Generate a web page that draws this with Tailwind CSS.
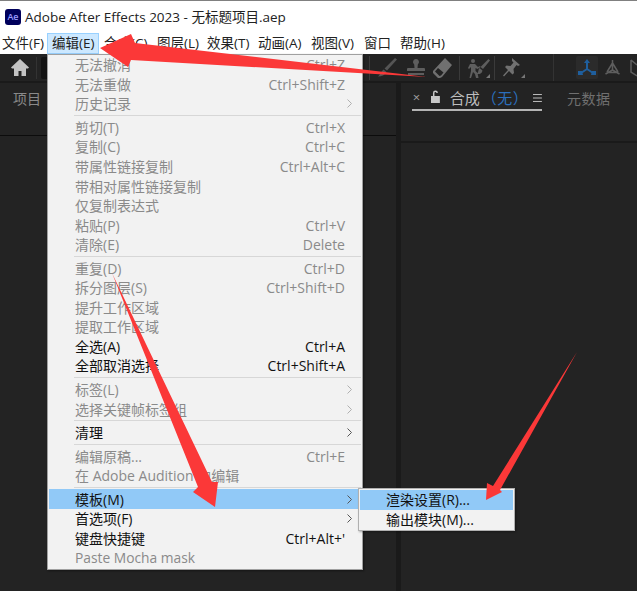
<!DOCTYPE html>
<html lang="zh-CN">
<head>
  <meta charset="utf-8" />
  <title>Adobe After Effects 2023</title>
  <script src="https://cdn.jsdelivr.net/npm/@tailwindcss/browser@4"></script>
</head>
<body class="w-[637px] h-[591px] overflow-hidden bg-[#232323] font-['Open_Sans','Noto_Sans_CJK_SC',sans-serif] text-[14px] text-[#111]">
<div class="relative w-[637px] h-[591px] flex flex-col">
  <!-- Title bar -->
  <div class="h-[33px] bg-white border-t border-[#808080] flex items-center pl-[5px] gap-[4px] shrink-0">
    <div class="w-[16px] h-[16px] rounded-[3px] bg-[#00005b] text-[#9999ff] text-[9px] leading-[16px] text-center font-semibold">Ae</div>
    <span class="text-[13.5px] text-[#222] whitespace-nowrap">Adobe After Effects 2023 - 无标题项目.aep</span>
  </div>
  <!-- Menu bar -->
  <div class="h-[21px] bg-white flex items-center shrink-0 text-[13.5px] text-[#222] whitespace-nowrap">
    <span class="pl-[2px] w-[47px]">文件(F)</span>
    <span class="h-[21px] w-[52px] pl-[4px] leading-[19px] bg-[#cce8ff] border border-[#99d1ff]">编辑(E)</span>
    <span class="w-[58px] pl-[5px]">合成(C)</span>
    <span class="w-[50px]">图层(L)</span>
    <span class="w-[51px]">效果(T)</span>
    <span class="w-[53px]">动画(A)</span>
    <span class="w-[53px]">视图(V)</span>
    <span class="w-[36px]">窗口</span>
    <span>帮助(H)</span>
  </div>
  <!-- Toolbar -->
  <div class="h-[29px] bg-[#232323] flex items-center shrink-0 border-b-2 border-[#1a1a1a]">
    <svg class="ml-[11px] w-[18px] h-[17px]" viewBox="0 0 18 17"><path fill="#c4c4c4" d="M9 0 0 8.500 1 9.500h2V17h4.500v-5h3v5H15V9.500h2l1-1z"/></svg>
    <div class="ml-[7px] w-px h-[22px] bg-[#333]"></div>
    <div class="ml-[4px] w-[6px] h-[22px] bg-[#141414] rounded-l-[2px]"></div>
    <div class="ml-[322px] w-px h-[24px] bg-[#3a3a3a]"></div>
    <svg class="ml-[8px] w-[19px] h-[19px]" viewBox="0 0 19 19"><path fill="#555" d="M17 0l2 1.500L9 12.500 6.500 10.500zM5.500 11.500l3 2.500C7 17 3.500 18.500 0 18.500c2-1.500 3-5 5.500-7z"/></svg>
    <svg class="ml-[10px] w-[18px] h-[17px]" viewBox="0 0 18 17"><path fill="#5e5e5e" d="M9 0a3 3 0 0 1 1.800 5.400L10.500 9H17a1 1 0 0 1 1 1v2H0v-2a1 1 0 0 1 1-1h6.500l-.3-3.600A3 3 0 0 1 9 0zM1 14h16v2H1z"/></svg>
    <svg class="ml-[8px] w-[19px] h-[20px]" viewBox="0 0 19 20"><path fill="#707070" fill-rule="evenodd" d="M12 0l7 7-10 12-2 1-2 0-5-5 0-2zM5 10 2 13.500 6.500 18l1.500-.500 2.500-3z"/></svg>
    <div class="ml-[7px] w-px h-[24px] bg-[#3a3a3a]"></div>
    <svg class="ml-[7px] w-[23px] h-[20px]" viewBox="0 0 23 20"><circle cx="6" cy="3" r="2" fill="#5e5e5e"/><path fill="#5e5e5e" d="M3 6h5l3 3 2-1 .500 1-3 2-2-1v3l2 2 1 5H9l-1-4-2-2-2 6H2.500l1.500-7V9l-2 2-1-1zM21.500 1 23 2.500 16 11l-2.500-2zM12.500 10l3 2.500c-.5 3-3 4-5.500 3.500 1.500-1.500 1-4 2.500-6z"/><path fill="#777" d="M23 16v4h-4z"/></svg>
    <div class="ml-[4px] w-px h-[24px] bg-[#3a3a3a]"></div>
    <svg class="ml-[8px] w-[22px] h-[20px]" viewBox="0 0 22 20"><path fill="#707070" d="M9 0l8 7-2 1-1.500-1-3 4 .5 4-1.500 1.500-3.500-3.500L1 18.500 0 17.500l5-5.500-3-3L3.500 7.500l4 .5 3-3.500L9 3z"/><path fill="#777" d="M22 16v4h-4z"/></svg>
    <div class="ml-[28px] w-px h-[27px] bg-[#333]"></div>
    <div class="ml-[22px] w-[22px] h-[23px] rounded-[2px] bg-[#2b2b2b] flex items-center justify-center">
      <svg class="w-[18px] h-[17px]" viewBox="0 0 18 17" fill="none" stroke="#1f5f9e" stroke-width="2"><path d="M9 3v7M9 10l-6 4M9 10l6 4"/><path fill="#1f5f9e" stroke="none" d="M9 0l3 4H6zM0 12h4l1 4H0zM18 12h-4l-1 4h5z"/></svg>
    </div>
    <svg class="ml-[5px] w-[19px] h-[19px]" viewBox="0 0 19 19" fill="none" stroke="#5e5e5e" stroke-width="1.500"><path d="M9.500 2v10M9.500 12l-7 4M9.500 12l7 4M9.500 5 4 14M9.500 5l5.500 9M4 14.500h11"/></svg>
    <svg class="ml-[8px] w-[7px] h-[19px]" viewBox="0 0 7 19" fill="none" stroke="#5e5e5e" stroke-width="1.500"><path d="M1 2v12l6 4M1 2l6 5"/></svg>
  </div>
  <!-- Panels -->
  <div class="flex-1 flex bg-[#1a1a1a] gap-[5px]">
    <div class="w-[396px] bg-[#232323]">
      <div class="h-[53px] border-b border-[#0c0c0c] pt-[6px] pl-[13px] text-[14px] leading-[20px] text-[#8a8a8a]">项目</div>
    </div>
    <div class="flex-1 bg-[#232323]">
      <div class="h-[60px] border-b-2 border-[#1a1a1a] pl-[11px] flex items-start">
        <div class="w-[130px] h-[28px] pt-[4px] border-b-2 border-[#b4b4b4] flex items-center text-[#bdbdbd] whitespace-nowrap">
          <span class="w-[9px] text-center text-[13px] text-[#a0a0a0]">×</span>
          <svg class="ml-[9px] w-[11px] h-[13px] mb-[3px]" viewBox="0 0 11 13"><path fill="#c8c8c8" d="M1 6h9v7H1zM3 6V3a2.500 2.500 0 0 1 5 0h-1.500a1 1 0 0 0-2 0v3z"/></svg>
          <span class="ml-[9px] w-[30px] text-[15px]">合成</span>
          <span class="ml-[2px] w-[52px] text-[15px] tracking-[0.5px] text-[#2b6fbd]">（无）</span>
          <svg class="w-[9px] h-[8px]" viewBox="0 0 9 8"><path stroke="#c0c0c0" d="M0 .5h9M0 4h9M0 7.500h9"/></svg>
        </div>
        <span class="ml-[25px] mt-[6px] text-[14px] leading-[20px] text-[#707070] tracking-[0.5px]">元数据</span>
      </div>
    </div>
  </div>

  <!-- Edit menu -->
  <div class="absolute left-[47px] top-[54px] w-[316px] h-[516px] bg-[#f2f2f2] border border-[#a0a0a0] shadow-[1px_1px_2px_rgba(0,0,0,.4)] px-[1px]">
    <div class="flex justify-between items-center h-[19.550px] pl-[26px] pr-[16px] text-[#8a8a8a]"><span>无法撤消</span><span>Ctrl+Z</span></div>
    <div class="flex justify-between items-center h-[19.550px] pl-[26px] pr-[16px] text-[#8a8a8a]"><span>无法重做</span><span>Ctrl+Shift+Z</span></div>
    <div class="flex justify-between items-center h-[19.550px] pl-[26px] pr-[9px] text-[#8a8a8a]"><span>历史记录</span><svg class="w-[5px] h-[9px]" viewBox="0 0 5 9" fill="none" stroke="#b0b0b0"><path d="M.5.5l4 4-4 4"/></svg></div>
    <div class="h-[4px] ml-[25px] flex items-center"><div class="h-px w-full bg-[#d7d7d7]"></div></div>
    <div class="flex justify-between items-center h-[19.550px] pl-[26px] pr-[16px] text-[#8a8a8a]"><span>剪切(T)</span><span>Ctrl+X</span></div>
    <div class="flex justify-between items-center h-[19.550px] pl-[26px] pr-[16px] text-[#8a8a8a]"><span>复制(C)</span><span>Ctrl+C</span></div>
    <div class="flex justify-between items-center h-[19.550px] pl-[26px] pr-[16px] text-[#8a8a8a]"><span>带属性链接复制</span><span>Ctrl+Alt+C</span></div>
    <div class="flex justify-between items-center h-[19.550px] pl-[26px] pr-[16px] text-[#8a8a8a]"><span>带相对属性链接复制</span></div>
    <div class="flex justify-between items-center h-[19.550px] pl-[26px] pr-[16px] text-[#8a8a8a]"><span>仅复制表达式</span></div>
    <div class="flex justify-between items-center h-[19.550px] pl-[26px] pr-[16px] text-[#8a8a8a]"><span>粘贴(P)</span><span>Ctrl+V</span></div>
    <div class="flex justify-between items-center h-[19.550px] pl-[26px] pr-[16px] text-[#8a8a8a]"><span>清除(E)</span><span>Delete</span></div>
    <div class="h-[4px] ml-[25px] flex items-center"><div class="h-px w-full bg-[#d7d7d7]"></div></div>
    <div class="flex justify-between items-center h-[19.550px] pl-[26px] pr-[16px] text-[#8a8a8a]"><span>重复(D)</span><span>Ctrl+D</span></div>
    <div class="flex justify-between items-center h-[19.550px] pl-[26px] pr-[16px] text-[#8a8a8a]"><span>拆分图层(S)</span><span>Ctrl+Shift+D</span></div>
    <div class="flex justify-between items-center h-[19.550px] pl-[26px] pr-[16px] text-[#8a8a8a]"><span>提升工作区域</span></div>
    <div class="flex justify-between items-center h-[19.550px] pl-[26px] pr-[16px] text-[#8a8a8a]"><span>提取工作区域</span></div>
    <div class="flex justify-between items-center h-[19.550px] pl-[26px] pr-[16px]"><span>全选(A)</span><span>Ctrl+A</span></div>
    <div class="flex justify-between items-center h-[19.550px] pl-[26px] pr-[16px]"><span>全部取消选择</span><span>Ctrl+Shift+A</span></div>
    <div class="h-[4px] ml-[25px] flex items-center"><div class="h-px w-full bg-[#d7d7d7]"></div></div>
    <div class="flex justify-between items-center h-[19.550px] pl-[26px] pr-[9px] text-[#8a8a8a]"><span>标签(L)</span><svg class="w-[5px] h-[9px]" viewBox="0 0 5 9" fill="none" stroke="#b0b0b0"><path d="M.5.5l4 4-4 4"/></svg></div>
    <div class="flex justify-between items-center h-[19.550px] pl-[26px] pr-[9px] text-[#8a8a8a]"><span>选择关键帧标签组</span><svg class="w-[5px] h-[9px]" viewBox="0 0 5 9" fill="none" stroke="#b0b0b0"><path d="M.5.5l4 4-4 4"/></svg></div>
    <div class="h-[4px] ml-[25px] flex items-center"><div class="h-px w-full bg-[#d7d7d7]"></div></div>
    <div class="flex justify-between items-center h-[19.550px] pl-[26px] pr-[9px]"><span>清理</span><svg class="w-[5px] h-[9px]" viewBox="0 0 5 9" fill="none" stroke="#555"><path d="M.5.5l4 4-4 4"/></svg></div>
    <div class="h-[4px] ml-[25px] flex items-center"><div class="h-px w-full bg-[#d7d7d7]"></div></div>
    <div class="flex justify-between items-center h-[19.550px] pl-[26px] pr-[16px] text-[#8a8a8a]"><span>编辑原稿...</span><span>Ctrl+E</span></div>
    <div class="flex justify-between items-center h-[19.550px] pl-[26px] pr-[16px] text-[#8a8a8a]"><span>在 Adobe Audition 中编辑</span></div>
    <div class="h-[4px] ml-[25px] flex items-center"><div class="h-px w-full bg-[#d7d7d7]"></div></div>
    <div class="flex justify-between items-center h-[19.550px] pl-[26px] pr-[9px] bg-[#91c9f7]"><span>模板(M)</span><svg class="w-[5px] h-[9px]" viewBox="0 0 5 9" fill="none" stroke="#555"><path d="M.5.5l4 4-4 4"/></svg></div>
    <div class="flex justify-between items-center h-[19.550px] pl-[26px] pr-[9px]"><span>首选项(F)</span><svg class="w-[5px] h-[9px]" viewBox="0 0 5 9" fill="none" stroke="#555"><path d="M.5.5l4 4-4 4"/></svg></div>
    <div class="flex justify-between items-center h-[19.550px] pl-[26px] pr-[16px]"><span>键盘快捷键</span><span>Ctrl+Alt+'</span></div>
    <div class="flex justify-between items-center h-[19.550px] pl-[26px] pr-[16px] text-[#8a8a8a]"><span class="text-[13.8px]">Paste Mocha mask</span></div>
  </div>

  <!-- Template submenu -->
  <div class="absolute left-[358px] top-[488px] w-[157px] h-[43px] bg-[#f2f2f2] border border-[#b0b0b0] shadow-[1px_1px_2px_rgba(0,0,0,.3)] p-[1px]">
    <div class="h-[19.500px] flex items-center pl-[26px] bg-[#91c9f7]">渲染设置(R)...</div>
    <div class="h-[19.500px] flex items-center pl-[26px]">输出模块(M)...</div>
  </div>

  <!-- Red annotation arrows -->
  <svg class="absolute inset-0 w-[637px] h-[591px] pointer-events-none" viewBox="0 0 637 591" fill="#fb3838">
    <path d="M100 48 131 34 135 43 427 77 131 60 128 67z"/>
    <path d="M112 273 212 482 218 482 215 507 193 492 198 487z"/>
    <path d="M577 352 500 490 502 492 486 500 487 483 493 486z"/>
  </svg>
</div>
</body>
</html>
